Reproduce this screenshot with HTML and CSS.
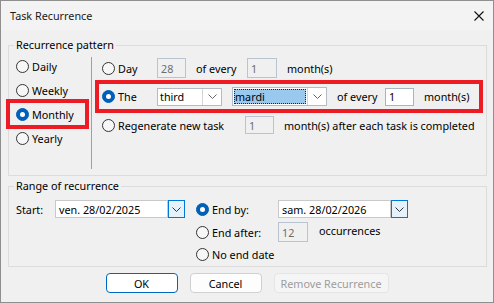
FILE: index.html
```html
<!DOCTYPE html>
<html>
<head>
<meta charset="utf-8">
<link rel="stylesheet" href="styles.css">
</head>
<body>
<div class="window">
  <div class="titlebar">
    <span class="title">Task Recurrence</span>
    <svg class="close" width="10" height="10" viewBox="0 0 10 10"><path d="M0.5 0.5 L9.5 9.5 M9.5 0.5 L0.5 9.5" stroke="#111" stroke-width="1.1" fill="none"/></svg>
  </div>
  <div class="body">
    <fieldset class="group g1">
      <legend>Recurrence pattern</legend>
      <div class="pattern">
        <div class="freq">
          <div class="opt"><span class="radio"></span>Daily</div>
          <div class="opt"><span class="radio"></span>Weekly</div>
          <div class="opt mark"><span class="radio on"></span>Monthly</div>
          <div class="opt"><span class="radio"></span>Yearly</div>
        </div>
        <div class="sep"></div>
        <div class="detail">
          <div class="row r-day">
            <div class="lbl w55"><span class="radio"></span>Day</div>
            <div class="input dis w29 h20">28</div>
            <div class="txt pl10 w61">of every</div>
            <div class="input dis w30 h20">1</div>
            <div class="txt pl10">month(s)</div>
          </div>
          <div class="row r-the mark">
            <div class="lbl w55"><span class="radio on"></span>The</div>
            <div class="combo c-third"><span class="ctext">third</span><span class="cbtn"><svg width="9" height="5" viewBox="0 0 9 5"><path d="M0.5 0.5 L4.5 4.5 L8.5 0.5" fill="none" stroke="#666"/></svg></span></div>
            <div class="combo c-mardi"><span class="ctext"><span class="sel">mardi</span></span><span class="cbtn"><svg width="9" height="5" viewBox="0 0 9 5"><path d="M0.5 0.5 L4.5 4.5 L8.5 0.5" fill="none" stroke="#666"/></svg></span></div>
            <div class="txt pl10 w58">of every</div>
            <div class="input w29 h18">1</div>
            <div class="txt pl10">month(s)</div>
          </div>
          <div class="row r-regen">
            <div class="lbl w143"><span class="radio"></span>Regenerate new task</div>
            <div class="input dis w29 h18">1</div>
            <div class="txt pl10">month(s) after each task is completed</div>
          </div>
        </div>
      </div>
    </fieldset>
    <fieldset class="group g2">
      <legend>Range of recurrence</legend>
      <div class="range">
        <div class="startcol">
          <div class="rrow">
            <span class="startlbl">Start:</span>
            <div class="datecombo"><span class="dtext">ven. 28/02/2025</span><span class="dbtn"><svg width="9" height="5" viewBox="0 0 9 5"><path d="M0.5 0.5 L4.5 4.5 L8.5 0.5" fill="none" stroke="#333"/></svg></span></div>
          </div>
        </div>
        <div class="endcol">
          <div class="rrow">
            <div class="lbl w82"><span class="radio on"></span>End by:</div>
            <div class="datecombo"><span class="dtext">sam. 28/02/2026</span><span class="dbtn"><svg width="9" height="5" viewBox="0 0 9 5"><path d="M0.5 0.5 L4.5 4.5 L8.5 0.5" fill="none" stroke="#333"/></svg></span></div>
          </div>
          <div class="rrow r2">
            <div class="lbl w82"><span class="radio"></span>End after:</div>
            <div class="input dis w30 h20">12</div>
            <div class="txt pl11 up">occurrences</div>
          </div>
          <div class="rrow">
            <div class="lbl"><span class="radio"></span>No end date</div>
          </div>
        </div>
      </div>
    </fieldset>
    <div class="buttons">
      <button class="btn primary">OK</button>
      <button class="btn">Cancel</button>
      <button class="btn disabled wide">Remove Recurrence</button>
    </div>
  </div>
</div>
</body>
</html>
```

FILE: styles.css
```css
* { box-sizing: border-box; }
html, body { margin: 0; padding: 0; }
body {
  font-family: "Noto Sans", "Open Sans", sans-serif;
  font-size: 10.8px;
  color: #000;
  background: #f0f0f0;
}
.window {
  width: 494px;
  height: 303px;
  border: 1px solid #8f8f8f;
  background: #f0f0f0;
  overflow: hidden;
}
.titlebar {
  height: 29px;
  background: #f3f3f3;
  display: flex;
  align-items: center;
  justify-content: space-between;
  padding: 0 9px 0 9px;
}
.title { color: #1a1a1a; }
.close { display: block; }
.body { padding: 0 0 0 7px; }

.group {
  margin: 0;
  padding: 0;
  width: 479px;
  border: 1px solid #dcdcdc;
  min-inline-size: 0;
}
.group legend {
  margin-left: 5px;
  padding: 0 2px;
  line-height: 16px;
  height: 16px;
}
.g1 { margin-top: 7px; }
.g2 { margin-top: 2px; }

.pattern {
  display: flex;
  height: 122px;
}
.freq {
  width: 82px;
  padding-top: 1px;
}
.opt {
  height: 24px;
  width: 77px;
  display: flex;
  align-items: center;
  padding-left: 7px;
}
.mark {
  outline: 4px solid #ed1c24;
  outline-offset: -1px;
}
.r-the.mark { outline-offset: 0; }
.sep {
  width: 1px;
  height: 112px;
  margin-top: 4px;
  background: #a0a0a0;
}
.detail { padding-left: 7px; }
.row {
  width: 380px;
  display: flex;
  align-items: center;
  padding-left: 3px;
  white-space: nowrap;
}
.r-day { height: 24px; margin-top: 3px; }
.r-the { height: 25px; margin-top: 4px; }
.r-regen { height: 24px; margin-top: 4px; }

.radio {
  width: 13px;
  height: 13px;
  border: 1px solid #333;
  border-radius: 50%;
  background: #f7f7f7;
  margin-right: 3px;
  flex: none;
  position: relative;
}
.radio.on {
  border-color: #005fb8;
  background: #005fb8;
}
.radio.on::after {
  content: "";
  position: absolute;
  left: 3px;
  top: 3px;
  width: 5px;
  height: 5px;
  border-radius: 50%;
  background: #fff;
}
.lbl { display: flex; align-items: center; flex: none; white-space: nowrap; }
.w55 { width: 55px; }
.w82 { width: 82px; }
.w143 { width: 143px; }
.w61 { width: 61px; }
.w58 { width: 58px; }
.txt { flex: none; white-space: nowrap; }
.pl10 { padding-left: 10px; }
.pl11 { padding-left: 11px; }
.up { position: relative; top: -2px; }

.input {
  flex: none;
  background: #fff;
  border: 1px solid #a7b4c2;
  padding-left: 3px;
  display: flex;
  align-items: center;
  color: #000;
}
.input.dis {
  background: #f0f0f0;
  border-color: #b9c4cf;
  color: #6d6d6d;
}
.w29 { width: 29px; }
.w30 { width: 30px; }
.h20 { height: 20px; }
.h18 { height: 18px; }

.combo {
  flex: none;
  display: flex;
  border: 1px solid #b3bcc6;
  background: #fff;
}
.c-third { width: 65px; height: 18px; }
.c-mardi { width: 95px; height: 19px; margin-left: 10px; }
.ctext {
  flex: 1;
  display: flex;
  align-items: center;
  padding-left: 2px;
}
.c-mardi .ctext { padding: 1px; }
.sel {
  display: flex;
  align-items: center;
  width: 100%;
  height: 100%;
  background: #99c9ef;
  outline: 1px dotted #222;
  outline-offset: -1px;
  padding-left: 1px;
}
.cbtn {
  width: 19px;
  flex: none;
  border-left: 1px solid #d5d5d5;
  display: flex;
  align-items: center;
  justify-content: center;
  background: #fff;
}
.cbtn svg, .dbtn svg { display: block; }

.range {
  display: flex;
  padding-top: 4px;
  padding-bottom: 1px;
}
.startcol { padding-left: 7px; }
.endcol { margin-left: 11px; }
.rrow {
  height: 22px;
  display: flex;
  align-items: center;
  white-space: nowrap;
}
.r2 { margin-top: 1px; }
.startlbl { width: 39px; }
.datecombo {
  display: flex;
  width: 130px;
  height: 18px;
}
.dtext {
  width: 113px;
  background: #fff;
  border: 1px solid #c9c9c9;
  display: flex;
  align-items: center;
  padding-left: 3px;
}
.dbtn {
  width: 17px;
  border: 1px solid #0078d7;
  background: #e5f1fb;
  display: flex;
  align-items: center;
  justify-content: center;
}

.buttons {
  display: flex;
  justify-content: center;
  gap: 12px;
  margin-top: 6px;
  padding-right: 7px;
}
.btn {
  font-family: inherit;
  font-size: 10.8px;
  width: 72px;
  height: 20px;
  padding: 0;
  background: #fdfdfd;
  border: 1px solid #d0d0d0;
  border-radius: 4px;
  color: #000;
}
.btn.primary { border-color: #0067c0; background: #fff; }
.btn.disabled {
  background: #f5f5f5;
  border-color: #e5e5e5;
  color: #9d9d9d;
}
.btn.wide { width: 115px; }
```
